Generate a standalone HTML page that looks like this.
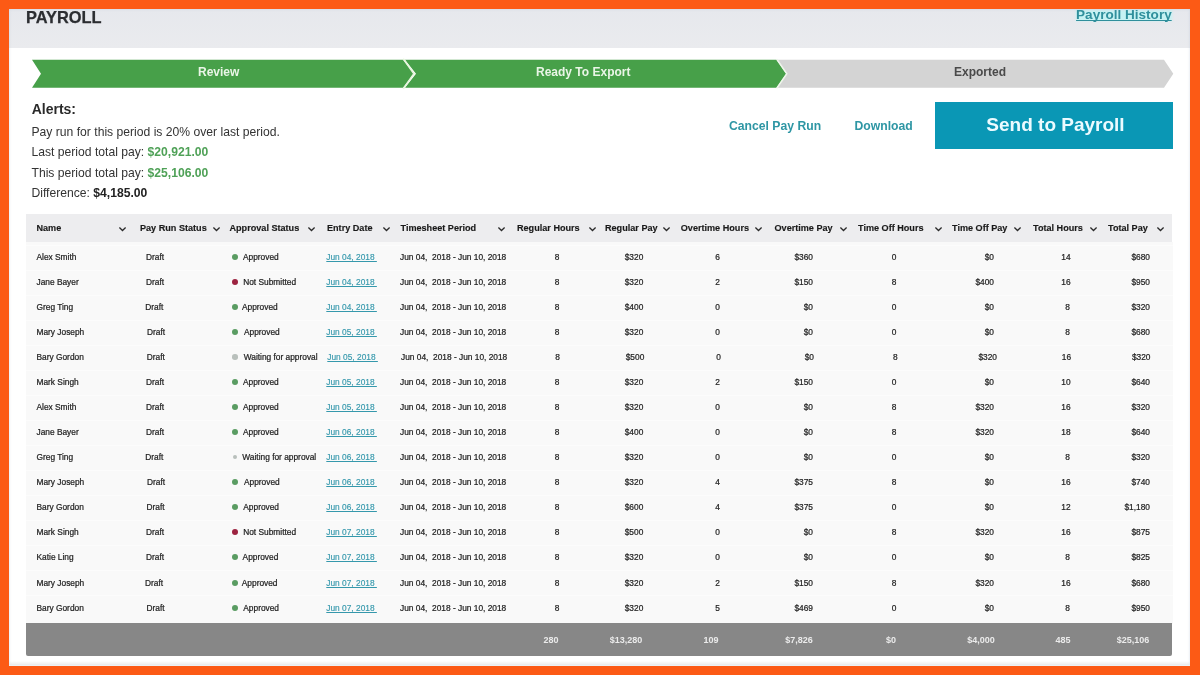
<!DOCTYPE html>
<html><head><meta charset="utf-8"><title>Payroll</title>
<style>
html,body{margin:0;padding:0;}
body{width:1200px;height:675px;overflow:hidden;background:#fc5a15;font-family:"Liberation Sans",sans-serif;position:relative;color:#222;}
#page{position:absolute;left:9px;top:9px;width:1181.4px;height:656.8px;background:#fff;overflow:hidden;}
#topbar{position:absolute;left:0;top:0;width:1181px;height:39.4px;background:linear-gradient(#e6e8ed,#eaebee);}
#txt{position:absolute;left:0;top:0;width:1181px;height:657px;will-change:transform;}
.abs{position:absolute;white-space:nowrap;}
#title{left:17px;top:-1.3px;font-size:16.4px;font-weight:bold;color:#2b2d31;-webkit-text-stroke:0.25px #2b2d31;}
#hist{right:18.3px;top:-1.9px;font-size:13.56px;font-weight:bold;color:#2f8f9c;text-decoration:underline;text-decoration-skip-ink:none;}
.cell{position:absolute;white-space:nowrap;font-size:8.35px;color:#1e1e1e;line-height:12px;-webkit-text-stroke:0.22px #1e1e1e;}
.hd{position:absolute;white-space:nowrap;font-size:9.1px;font-weight:bold;color:#1a1a1a;line-height:12px;-webkit-text-stroke:0.15px #1a1a1a;}
.lnk{color:#3598ac;text-decoration:underline;text-decoration-skip-ink:none;-webkit-text-stroke:0.15px #3598ac;}
.row{position:absolute;left:17px;width:1147px;height:24px;background:#f9f9f9;border-top:1px solid #fcfcfc;}
.dot{position:absolute;width:6px;height:6px;border-radius:50%;}
.ft{position:absolute;white-space:nowrap;font-size:9px;font-weight:bold;color:#ebebeb;line-height:12px;}
.al{position:absolute;left:22.5px;white-space:nowrap;font-size:12.15px;color:#333;line-height:14px;}
.g{color:#4fa157;font-weight:bold;}
</style></head><body>
<div id="page">
<div id="topbar"></div>
<svg class="abs" style="left:0;top:0" width="1181" height="100" viewBox="9 8.3 1181 100">
<polygon points="32,59 403,59 414,73 403,87 32,87 41,73" fill="#47a049"/>
<polygon points="405,59 776.5,59 786.3,73 776.5,87 405,87 416,73" fill="#47a049"/>
<polyline points="403.3,58 413.9,73 403.3,88" fill="none" stroke="#e6f5dc" stroke-width="1.6"/>
<polygon points="777,59 1164,59 1173.3,73 1164,87 777,87 786.8,73" fill="#d4d4d4"/>
<polyline points="776.8,58.5 786.8,73 776.8,87.5" fill="none" stroke="#eef5ea" stroke-width="1.5"/>
</svg>
<div class="abs" style="left:926px;top:93px;width:237.6px;height:46.5px;background:#0a97b5;"></div>
<div class="abs" style="left:1067px;top:1px;width:95.5px;height:10.5px;background:#c6f2f3;filter:blur(0.8px);"></div>
<div class="abs" style="left:17px;top:233px;width:1147px;height:382px;background:#f9f9f9;"></div>
<div class="abs" style="left:17px;top:205.3px;width:1146px;height:28.2px;background:#ededef;"></div>

<div class="row" style="top:235.5px;"></div>
<div class="dot" style="left:223.0px;top:245.2px;width:6px;height:6px;background:#5a9c62;"></div>
<div class="row" style="top:260.54px;"></div>
<div class="dot" style="left:223.0px;top:270.2px;width:6px;height:6px;background:#9c2340;"></div>
<div class="row" style="top:285.58px;"></div>
<div class="dot" style="left:223.0px;top:295.2px;width:6px;height:6px;background:#5a9c62;"></div>
<div class="row" style="top:310.62px;"></div>
<div class="dot" style="left:223.0px;top:320.2px;width:6px;height:6px;background:#5a9c62;"></div>
<div class="row" style="top:335.65999999999997px;"></div>
<div class="dot" style="left:223.25px;top:345.45px;width:5.5px;height:5.5px;background:#b9c0bc;"></div>
<div class="row" style="top:360.7px;"></div>
<div class="dot" style="left:223.0px;top:370.2px;width:6px;height:6px;background:#5a9c62;"></div>
<div class="row" style="top:385.74px;"></div>
<div class="dot" style="left:223.0px;top:395.2px;width:6px;height:6px;background:#5a9c62;"></div>
<div class="row" style="top:410.78px;"></div>
<div class="dot" style="left:223.0px;top:420.2px;width:6px;height:6px;background:#5a9c62;"></div>
<div class="row" style="top:435.82px;"></div>
<div class="dot" style="left:223.7px;top:445.9px;width:4.6px;height:4.6px;background:#b9c0bc;"></div>
<div class="row" style="top:460.86px;"></div>
<div class="dot" style="left:223.0px;top:470.2px;width:6px;height:6px;background:#5a9c62;"></div>
<div class="row" style="top:485.9px;"></div>
<div class="dot" style="left:223.0px;top:495.2px;width:6px;height:6px;background:#5a9c62;"></div>
<div class="row" style="top:510.94000000000005px;"></div>
<div class="dot" style="left:223.0px;top:520.2px;width:6px;height:6px;background:#9c2340;"></div>
<div class="row" style="top:535.98px;"></div>
<div class="dot" style="left:223.0px;top:545.2px;width:6px;height:6px;background:#5a9c62;"></div>
<div class="row" style="top:561.02px;"></div>
<div class="dot" style="left:223.0px;top:571.2px;width:6px;height:6px;background:#5a9c62;"></div>
<div class="row" style="top:586.06px;"></div>
<div class="dot" style="left:223.0px;top:596.2px;width:6px;height:6px;background:#5a9c62;"></div>
<div class="abs" style="left:17px;top:614.4px;width:1146px;height:32.6px;background:#878787;border-radius:0 0 2px 2px;"></div>
<div id="txt">
<div id="title" class="abs">PAYROLL</div>
<div id="hist" class="abs">Payroll History</div>
<div class="abs" style="left:189px;top:55.8px;font-size:12px;font-weight:bold;color:#e9f5e6;">Review</div>
<div class="abs" style="left:527px;top:55.8px;font-size:12px;font-weight:bold;color:#e9f5e6;">Ready To Export</div>
<div class="abs" style="left:945px;top:55.8px;font-size:12px;font-weight:bold;color:#4a4a4a;">Exported</div>
<div class="abs" style="left:22.7px;top:92.4px;font-size:14px;font-weight:bold;color:#2a2a2a;">Alerts:</div>
<div class="al" style="top:115.5px;">Pay run for this period is 20% over last period.</div>
<div class="al" style="top:136.2px;">Last period total pay: <span class="g">$20,921.00</span></div>
<div class="al" style="top:156.5px;">This period total pay: <span class="g">$25,106.00</span></div>
<div class="al" style="top:177px;">Difference: <b style="color:#222">$4,185.00</b></div>
<div class="abs" style="left:720px;top:110px;font-size:12.2px;font-weight:bold;color:#2e96a4;">Cancel Pay Run</div>
<div class="abs" style="left:845.5px;top:110px;font-size:12.2px;font-weight:bold;color:#2e96a4;">Download</div>
<div class="abs" style="left:928px;top:93px;width:237px;height:46.5px;line-height:46.5px;text-align:center;font-size:19px;font-weight:bold;color:#ecfbff;">Send to Payroll</div>

<div class="hd" style="left:27.5px;top:213px;">Name</div>
<svg class="abs" style="left:109.0px;top:217px" width="9" height="6" viewBox="0 0 9 6"><polyline points="1.4,1.5 4.5,4.5 7.6,1.5" fill="none" stroke="#2a2a2a" stroke-width="1.3"/></svg>
<div class="hd" style="left:131px;top:213px;">Pay Run Status</div>
<svg class="abs" style="left:202.5px;top:217px" width="9" height="6" viewBox="0 0 9 6"><polyline points="1.4,1.5 4.5,4.5 7.6,1.5" fill="none" stroke="#2a2a2a" stroke-width="1.3"/></svg>
<div class="hd" style="left:220.5px;top:213px;">Approval Status</div>
<svg class="abs" style="left:297.5px;top:217px" width="9" height="6" viewBox="0 0 9 6"><polyline points="1.4,1.5 4.5,4.5 7.6,1.5" fill="none" stroke="#2a2a2a" stroke-width="1.3"/></svg>
<div class="hd" style="left:318px;top:213px;">Entry Date</div>
<svg class="abs" style="left:373.0px;top:217px" width="9" height="6" viewBox="0 0 9 6"><polyline points="1.4,1.5 4.5,4.5 7.6,1.5" fill="none" stroke="#2a2a2a" stroke-width="1.3"/></svg>
<div class="hd" style="left:391.5px;top:213px;">Timesheet Period</div>
<svg class="abs" style="left:488.0px;top:217px" width="9" height="6" viewBox="0 0 9 6"><polyline points="1.4,1.5 4.5,4.5 7.6,1.5" fill="none" stroke="#2a2a2a" stroke-width="1.3"/></svg>
<div class="hd" style="left:508px;top:213px;">Regular Hours</div>
<svg class="abs" style="left:578.5px;top:217px" width="9" height="6" viewBox="0 0 9 6"><polyline points="1.4,1.5 4.5,4.5 7.6,1.5" fill="none" stroke="#2a2a2a" stroke-width="1.3"/></svg>
<div class="hd" style="left:596px;top:213px;">Regular Pay</div>
<svg class="abs" style="left:653.25px;top:217px" width="9" height="6" viewBox="0 0 9 6"><polyline points="1.4,1.5 4.5,4.5 7.6,1.5" fill="none" stroke="#2a2a2a" stroke-width="1.3"/></svg>
<div class="hd" style="left:671.75px;top:213px;">Overtime Hours</div>
<svg class="abs" style="left:745.25px;top:217px" width="9" height="6" viewBox="0 0 9 6"><polyline points="1.4,1.5 4.5,4.5 7.6,1.5" fill="none" stroke="#2a2a2a" stroke-width="1.3"/></svg>
<div class="hd" style="left:765.5px;top:213px;">Overtime Pay</div>
<svg class="abs" style="left:830.0px;top:217px" width="9" height="6" viewBox="0 0 9 6"><polyline points="1.4,1.5 4.5,4.5 7.6,1.5" fill="none" stroke="#2a2a2a" stroke-width="1.3"/></svg>
<div class="hd" style="left:849px;top:213px;">Time Off Hours</div>
<svg class="abs" style="left:924.5px;top:217px" width="9" height="6" viewBox="0 0 9 6"><polyline points="1.4,1.5 4.5,4.5 7.6,1.5" fill="none" stroke="#2a2a2a" stroke-width="1.3"/></svg>
<div class="hd" style="left:943px;top:213px;">Time Off Pay</div>
<svg class="abs" style="left:1004.0px;top:217px" width="9" height="6" viewBox="0 0 9 6"><polyline points="1.4,1.5 4.5,4.5 7.6,1.5" fill="none" stroke="#2a2a2a" stroke-width="1.3"/></svg>
<div class="hd" style="left:1024px;top:213px;">Total Hours</div>
<svg class="abs" style="left:1079.75px;top:217px" width="9" height="6" viewBox="0 0 9 6"><polyline points="1.4,1.5 4.5,4.5 7.6,1.5" fill="none" stroke="#2a2a2a" stroke-width="1.3"/></svg>
<div class="hd" style="left:1099px;top:213px;">Total Pay</div>
<svg class="abs" style="left:1146.5px;top:217px" width="9" height="6" viewBox="0 0 9 6"><polyline points="1.4,1.5 4.5,4.5 7.6,1.5" fill="none" stroke="#2a2a2a" stroke-width="1.3"/></svg>
<div class="cell" style="left:27.5px;top:242.0px;">Alex Smith</div>
<div class="cell" style="left:137px;top:242.0px;">Draft</div>
<div class="cell" style="left:234px;top:242.0px;">Approved</div>
<div class="cell lnk" style="left:317.3px;top:242.0px;">Jun 04, 2018&nbsp;</div>
<div class="cell" style="left:391.0px;top:242.0px;">Jun 04,&nbsp; 2018 - Jun 10, 2018</div>
<div class="cell" style="left:498.0px;width:100px;text-align:center;top:242.0px;">8</div>
<div class="cell" style="left:575.0px;width:100px;text-align:center;top:242.0px;">$320</div>
<div class="cell" style="left:658.6px;width:100px;text-align:center;top:242.0px;">6</div>
<div class="cell" style="left:704.0px;width:100px;text-align:right;top:242.0px;">$360</div>
<div class="cell" style="left:835.0px;width:100px;text-align:center;top:242.0px;">0</div>
<div class="cell" style="left:885.0px;width:100px;text-align:right;top:242.0px;">$0</div>
<div class="cell" style="left:1007.0px;width:100px;text-align:center;top:242.0px;">14</div>
<div class="cell" style="left:1041.0px;width:100px;text-align:right;top:242.0px;">$680</div>
<div class="cell" style="left:27.5px;top:267.04px;">Jane Bayer</div>
<div class="cell" style="left:137px;top:267.04px;">Draft</div>
<div class="cell" style="left:234.2px;top:267.04px;">Not Submitted</div>
<div class="cell lnk" style="left:317.3px;top:267.04px;">Jun 04, 2018&nbsp;</div>
<div class="cell" style="left:391.0px;top:267.04px;">Jun 04,&nbsp; 2018 - Jun 10, 2018</div>
<div class="cell" style="left:498.0px;width:100px;text-align:center;top:267.04px;">8</div>
<div class="cell" style="left:575.0px;width:100px;text-align:center;top:267.04px;">$320</div>
<div class="cell" style="left:658.6px;width:100px;text-align:center;top:267.04px;">2</div>
<div class="cell" style="left:704.0px;width:100px;text-align:right;top:267.04px;">$150</div>
<div class="cell" style="left:835.0px;width:100px;text-align:center;top:267.04px;">8</div>
<div class="cell" style="left:885.0px;width:100px;text-align:right;top:267.04px;">$400</div>
<div class="cell" style="left:1007.0px;width:100px;text-align:center;top:267.04px;">16</div>
<div class="cell" style="left:1041.0px;width:100px;text-align:right;top:267.04px;">$950</div>
<div class="cell" style="left:27.5px;top:292.08px;">Greg Ting</div>
<div class="cell" style="left:136.3px;top:292.08px;">Draft</div>
<div class="cell" style="left:233px;top:292.08px;">Approved</div>
<div class="cell lnk" style="left:317.3px;top:292.08px;">Jun 04, 2018&nbsp;</div>
<div class="cell" style="left:391.0px;top:292.08px;">Jun 04,&nbsp; 2018 - Jun 10, 2018</div>
<div class="cell" style="left:498.0px;width:100px;text-align:center;top:292.08px;">8</div>
<div class="cell" style="left:575.0px;width:100px;text-align:center;top:292.08px;">$400</div>
<div class="cell" style="left:658.6px;width:100px;text-align:center;top:292.08px;">0</div>
<div class="cell" style="left:704.0px;width:100px;text-align:right;top:292.08px;">$0</div>
<div class="cell" style="left:835.0px;width:100px;text-align:center;top:292.08px;">0</div>
<div class="cell" style="left:885.0px;width:100px;text-align:right;top:292.08px;">$0</div>
<div class="cell" style="left:1008.7px;width:100px;text-align:center;top:292.08px;">8</div>
<div class="cell" style="left:1041.0px;width:100px;text-align:right;top:292.08px;">$320</div>
<div class="cell" style="left:27.5px;top:317.12px;">Mary Joseph</div>
<div class="cell" style="left:138px;top:317.12px;">Draft</div>
<div class="cell" style="left:235px;top:317.12px;">Approved</div>
<div class="cell lnk" style="left:317.3px;top:317.12px;">Jun 05, 2018&nbsp;</div>
<div class="cell" style="left:391.0px;top:317.12px;">Jun 04,&nbsp; 2018 - Jun 10, 2018</div>
<div class="cell" style="left:498.0px;width:100px;text-align:center;top:317.12px;">8</div>
<div class="cell" style="left:575.0px;width:100px;text-align:center;top:317.12px;">$320</div>
<div class="cell" style="left:658.6px;width:100px;text-align:center;top:317.12px;">0</div>
<div class="cell" style="left:704.0px;width:100px;text-align:right;top:317.12px;">$0</div>
<div class="cell" style="left:835.0px;width:100px;text-align:center;top:317.12px;">0</div>
<div class="cell" style="left:885.0px;width:100px;text-align:right;top:317.12px;">$0</div>
<div class="cell" style="left:1008.7px;width:100px;text-align:center;top:317.12px;">8</div>
<div class="cell" style="left:1041.0px;width:100px;text-align:right;top:317.12px;">$680</div>
<div class="cell" style="left:27.5px;top:342.15999999999997px;">Bary Gordon</div>
<div class="cell" style="left:137.7px;top:342.15999999999997px;">Draft</div>
<div class="cell" style="left:234.7px;top:342.15999999999997px;">Waiting for approval</div>
<div class="cell lnk" style="left:318.3px;top:342.15999999999997px;">Jun 05, 2018&nbsp;</div>
<div class="cell" style="left:392.0px;top:342.15999999999997px;">Jun 04,&nbsp; 2018 - Jun 10, 2018</div>
<div class="cell" style="left:498.6px;width:100px;text-align:center;top:342.15999999999997px;">8</div>
<div class="cell" style="left:576.0px;width:100px;text-align:center;top:342.15999999999997px;">$500</div>
<div class="cell" style="left:659.6px;width:100px;text-align:center;top:342.15999999999997px;">0</div>
<div class="cell" style="left:705.0px;width:100px;text-align:right;top:342.15999999999997px;">$0</div>
<div class="cell" style="left:836.3px;width:100px;text-align:center;top:342.15999999999997px;">8</div>
<div class="cell" style="left:888.0px;width:100px;text-align:right;top:342.15999999999997px;">$320</div>
<div class="cell" style="left:1007.5px;width:100px;text-align:center;top:342.15999999999997px;">16</div>
<div class="cell" style="left:1041.5px;width:100px;text-align:right;top:342.15999999999997px;">$320</div>
<div class="cell" style="left:27.5px;top:367.2px;">Mark Singh</div>
<div class="cell" style="left:137px;top:367.2px;">Draft</div>
<div class="cell" style="left:234px;top:367.2px;">Approved</div>
<div class="cell lnk" style="left:317.3px;top:367.2px;">Jun 05, 2018&nbsp;</div>
<div class="cell" style="left:391.0px;top:367.2px;">Jun 04,&nbsp; 2018 - Jun 10, 2018</div>
<div class="cell" style="left:498.0px;width:100px;text-align:center;top:367.2px;">8</div>
<div class="cell" style="left:575.0px;width:100px;text-align:center;top:367.2px;">$320</div>
<div class="cell" style="left:658.6px;width:100px;text-align:center;top:367.2px;">2</div>
<div class="cell" style="left:704.0px;width:100px;text-align:right;top:367.2px;">$150</div>
<div class="cell" style="left:835.0px;width:100px;text-align:center;top:367.2px;">0</div>
<div class="cell" style="left:885.0px;width:100px;text-align:right;top:367.2px;">$0</div>
<div class="cell" style="left:1007.0px;width:100px;text-align:center;top:367.2px;">10</div>
<div class="cell" style="left:1041.0px;width:100px;text-align:right;top:367.2px;">$640</div>
<div class="cell" style="left:27.5px;top:392.24px;">Alex Smith</div>
<div class="cell" style="left:137px;top:392.24px;">Draft</div>
<div class="cell" style="left:234px;top:392.24px;">Approved</div>
<div class="cell lnk" style="left:317.3px;top:392.24px;">Jun 05, 2018&nbsp;</div>
<div class="cell" style="left:391.0px;top:392.24px;">Jun 04,&nbsp; 2018 - Jun 10, 2018</div>
<div class="cell" style="left:498.0px;width:100px;text-align:center;top:392.24px;">8</div>
<div class="cell" style="left:575.0px;width:100px;text-align:center;top:392.24px;">$320</div>
<div class="cell" style="left:658.6px;width:100px;text-align:center;top:392.24px;">0</div>
<div class="cell" style="left:704.0px;width:100px;text-align:right;top:392.24px;">$0</div>
<div class="cell" style="left:835.0px;width:100px;text-align:center;top:392.24px;">8</div>
<div class="cell" style="left:885.0px;width:100px;text-align:right;top:392.24px;">$320</div>
<div class="cell" style="left:1007.0px;width:100px;text-align:center;top:392.24px;">16</div>
<div class="cell" style="left:1041.0px;width:100px;text-align:right;top:392.24px;">$320</div>
<div class="cell" style="left:27.5px;top:417.28px;">Jane Bayer</div>
<div class="cell" style="left:137px;top:417.28px;">Draft</div>
<div class="cell" style="left:234px;top:417.28px;">Approved</div>
<div class="cell lnk" style="left:317.3px;top:417.28px;">Jun 06, 2018&nbsp;</div>
<div class="cell" style="left:391.0px;top:417.28px;">Jun 04,&nbsp; 2018 - Jun 10, 2018</div>
<div class="cell" style="left:498.0px;width:100px;text-align:center;top:417.28px;">8</div>
<div class="cell" style="left:575.0px;width:100px;text-align:center;top:417.28px;">$400</div>
<div class="cell" style="left:658.6px;width:100px;text-align:center;top:417.28px;">0</div>
<div class="cell" style="left:704.0px;width:100px;text-align:right;top:417.28px;">$0</div>
<div class="cell" style="left:835.0px;width:100px;text-align:center;top:417.28px;">8</div>
<div class="cell" style="left:885.0px;width:100px;text-align:right;top:417.28px;">$320</div>
<div class="cell" style="left:1007.0px;width:100px;text-align:center;top:417.28px;">18</div>
<div class="cell" style="left:1041.0px;width:100px;text-align:right;top:417.28px;">$640</div>
<div class="cell" style="left:27.5px;top:442.32px;">Greg Ting</div>
<div class="cell" style="left:136.3px;top:442.32px;">Draft</div>
<div class="cell" style="left:233.3px;top:442.32px;">Waiting for approval</div>
<div class="cell lnk" style="left:317.3px;top:442.32px;">Jun 06, 2018&nbsp;</div>
<div class="cell" style="left:391.0px;top:442.32px;">Jun 04,&nbsp; 2018 - Jun 10, 2018</div>
<div class="cell" style="left:498.0px;width:100px;text-align:center;top:442.32px;">8</div>
<div class="cell" style="left:575.0px;width:100px;text-align:center;top:442.32px;">$320</div>
<div class="cell" style="left:658.6px;width:100px;text-align:center;top:442.32px;">0</div>
<div class="cell" style="left:704.0px;width:100px;text-align:right;top:442.32px;">$0</div>
<div class="cell" style="left:835.0px;width:100px;text-align:center;top:442.32px;">0</div>
<div class="cell" style="left:885.0px;width:100px;text-align:right;top:442.32px;">$0</div>
<div class="cell" style="left:1008.7px;width:100px;text-align:center;top:442.32px;">8</div>
<div class="cell" style="left:1041.0px;width:100px;text-align:right;top:442.32px;">$320</div>
<div class="cell" style="left:27.5px;top:467.36px;">Mary Joseph</div>
<div class="cell" style="left:138px;top:467.36px;">Draft</div>
<div class="cell" style="left:235px;top:467.36px;">Approved</div>
<div class="cell lnk" style="left:317.3px;top:467.36px;">Jun 06, 2018&nbsp;</div>
<div class="cell" style="left:391.0px;top:467.36px;">Jun 04,&nbsp; 2018 - Jun 10, 2018</div>
<div class="cell" style="left:498.0px;width:100px;text-align:center;top:467.36px;">8</div>
<div class="cell" style="left:575.0px;width:100px;text-align:center;top:467.36px;">$320</div>
<div class="cell" style="left:658.6px;width:100px;text-align:center;top:467.36px;">4</div>
<div class="cell" style="left:704.0px;width:100px;text-align:right;top:467.36px;">$375</div>
<div class="cell" style="left:835.0px;width:100px;text-align:center;top:467.36px;">8</div>
<div class="cell" style="left:885.0px;width:100px;text-align:right;top:467.36px;">$0</div>
<div class="cell" style="left:1007.0px;width:100px;text-align:center;top:467.36px;">16</div>
<div class="cell" style="left:1041.0px;width:100px;text-align:right;top:467.36px;">$740</div>
<div class="cell" style="left:27.5px;top:492.4px;">Bary Gordon</div>
<div class="cell" style="left:137.5px;top:492.4px;">Draft</div>
<div class="cell" style="left:234.3px;top:492.4px;">Approved</div>
<div class="cell lnk" style="left:317.3px;top:492.4px;">Jun 06, 2018&nbsp;</div>
<div class="cell" style="left:391.0px;top:492.4px;">Jun 04,&nbsp; 2018 - Jun 10, 2018</div>
<div class="cell" style="left:498.0px;width:100px;text-align:center;top:492.4px;">8</div>
<div class="cell" style="left:575.0px;width:100px;text-align:center;top:492.4px;">$600</div>
<div class="cell" style="left:658.6px;width:100px;text-align:center;top:492.4px;">4</div>
<div class="cell" style="left:704.0px;width:100px;text-align:right;top:492.4px;">$375</div>
<div class="cell" style="left:835.0px;width:100px;text-align:center;top:492.4px;">0</div>
<div class="cell" style="left:885.0px;width:100px;text-align:right;top:492.4px;">$0</div>
<div class="cell" style="left:1007.0px;width:100px;text-align:center;top:492.4px;">12</div>
<div class="cell" style="left:1041.0px;width:100px;text-align:right;top:492.4px;">$1,180</div>
<div class="cell" style="left:27.5px;top:517.44px;">Mark Singh</div>
<div class="cell" style="left:137px;top:517.44px;">Draft</div>
<div class="cell" style="left:234.2px;top:517.44px;">Not Submitted</div>
<div class="cell lnk" style="left:317.3px;top:517.44px;">Jun 07, 2018&nbsp;</div>
<div class="cell" style="left:391.0px;top:517.44px;">Jun 04,&nbsp; 2018 - Jun 10, 2018</div>
<div class="cell" style="left:498.0px;width:100px;text-align:center;top:517.44px;">8</div>
<div class="cell" style="left:575.0px;width:100px;text-align:center;top:517.44px;">$500</div>
<div class="cell" style="left:658.6px;width:100px;text-align:center;top:517.44px;">0</div>
<div class="cell" style="left:704.0px;width:100px;text-align:right;top:517.44px;">$0</div>
<div class="cell" style="left:835.0px;width:100px;text-align:center;top:517.44px;">8</div>
<div class="cell" style="left:885.0px;width:100px;text-align:right;top:517.44px;">$320</div>
<div class="cell" style="left:1007.0px;width:100px;text-align:center;top:517.44px;">16</div>
<div class="cell" style="left:1041.0px;width:100px;text-align:right;top:517.44px;">$875</div>
<div class="cell" style="left:27.5px;top:542.48px;">Katie Ling</div>
<div class="cell" style="left:137px;top:542.48px;">Draft</div>
<div class="cell" style="left:233.6px;top:542.48px;">Approved</div>
<div class="cell lnk" style="left:317.3px;top:542.48px;">Jun 07, 2018&nbsp;</div>
<div class="cell" style="left:391.0px;top:542.48px;">Jun 04,&nbsp; 2018 - Jun 10, 2018</div>
<div class="cell" style="left:498.0px;width:100px;text-align:center;top:542.48px;">8</div>
<div class="cell" style="left:575.0px;width:100px;text-align:center;top:542.48px;">$320</div>
<div class="cell" style="left:658.6px;width:100px;text-align:center;top:542.48px;">0</div>
<div class="cell" style="left:704.0px;width:100px;text-align:right;top:542.48px;">$0</div>
<div class="cell" style="left:835.0px;width:100px;text-align:center;top:542.48px;">0</div>
<div class="cell" style="left:885.0px;width:100px;text-align:right;top:542.48px;">$0</div>
<div class="cell" style="left:1008.7px;width:100px;text-align:center;top:542.48px;">8</div>
<div class="cell" style="left:1041.0px;width:100px;text-align:right;top:542.48px;">$825</div>
<div class="cell" style="left:27.5px;top:567.52px;">Mary Joseph</div>
<div class="cell" style="left:136px;top:567.52px;">Draft</div>
<div class="cell" style="left:232.8px;top:567.52px;">Approved</div>
<div class="cell lnk" style="left:317.3px;top:567.52px;">Jun 07, 2018&nbsp;</div>
<div class="cell" style="left:391.0px;top:567.52px;">Jun 04,&nbsp; 2018 - Jun 10, 2018</div>
<div class="cell" style="left:498.0px;width:100px;text-align:center;top:567.52px;">8</div>
<div class="cell" style="left:575.0px;width:100px;text-align:center;top:567.52px;">$320</div>
<div class="cell" style="left:658.6px;width:100px;text-align:center;top:567.52px;">2</div>
<div class="cell" style="left:704.0px;width:100px;text-align:right;top:567.52px;">$150</div>
<div class="cell" style="left:835.0px;width:100px;text-align:center;top:567.52px;">8</div>
<div class="cell" style="left:885.0px;width:100px;text-align:right;top:567.52px;">$320</div>
<div class="cell" style="left:1007.0px;width:100px;text-align:center;top:567.52px;">16</div>
<div class="cell" style="left:1041.0px;width:100px;text-align:right;top:567.52px;">$680</div>
<div class="cell" style="left:27.5px;top:592.56px;">Bary Gordon</div>
<div class="cell" style="left:137.5px;top:592.56px;">Draft</div>
<div class="cell" style="left:234.3px;top:592.56px;">Approved</div>
<div class="cell lnk" style="left:317.3px;top:592.56px;">Jun 07, 2018&nbsp;</div>
<div class="cell" style="left:391.0px;top:592.56px;">Jun 04,&nbsp; 2018 - Jun 10, 2018</div>
<div class="cell" style="left:498.0px;width:100px;text-align:center;top:592.56px;">8</div>
<div class="cell" style="left:575.0px;width:100px;text-align:center;top:592.56px;">$320</div>
<div class="cell" style="left:658.6px;width:100px;text-align:center;top:592.56px;">5</div>
<div class="cell" style="left:704.0px;width:100px;text-align:right;top:592.56px;">$469</div>
<div class="cell" style="left:835.0px;width:100px;text-align:center;top:592.56px;">0</div>
<div class="cell" style="left:885.0px;width:100px;text-align:right;top:592.56px;">$0</div>
<div class="cell" style="left:1008.7px;width:100px;text-align:center;top:592.56px;">8</div>
<div class="cell" style="left:1041.0px;width:100px;text-align:right;top:592.56px;">$950</div>
<div class="ft" style="left:492px;width:100px;text-align:center;top:624.7px;">280</div>
<div class="ft" style="left:567px;width:100px;text-align:center;top:624.7px;">$13,280</div>
<div class="ft" style="left:652px;width:100px;text-align:center;top:624.7px;">109</div>
<div class="ft" style="left:740px;width:100px;text-align:center;top:624.7px;">$7,826</div>
<div class="ft" style="left:832px;width:100px;text-align:center;top:624.7px;">$0</div>
<div class="ft" style="left:922px;width:100px;text-align:center;top:624.7px;">$4,000</div>
<div class="ft" style="left:1004px;width:100px;text-align:center;top:624.7px;">485</div>
<div class="ft" style="left:1074px;width:100px;text-align:center;top:624.7px;">$25,106</div>
</div>
<div class="abs" style="left:0;top:0;width:100%;height:100%;box-shadow:inset 0 0 2.5px rgba(170,185,205,0.55);pointer-events:none;"></div>
<div class="abs" style="left:0;bottom:0;width:100%;height:5px;background:linear-gradient(to bottom,rgba(232,232,232,0),rgba(230,230,230,0.7) 70%,rgba(236,246,252,1) 100%);"></div>
</div></body></html>
